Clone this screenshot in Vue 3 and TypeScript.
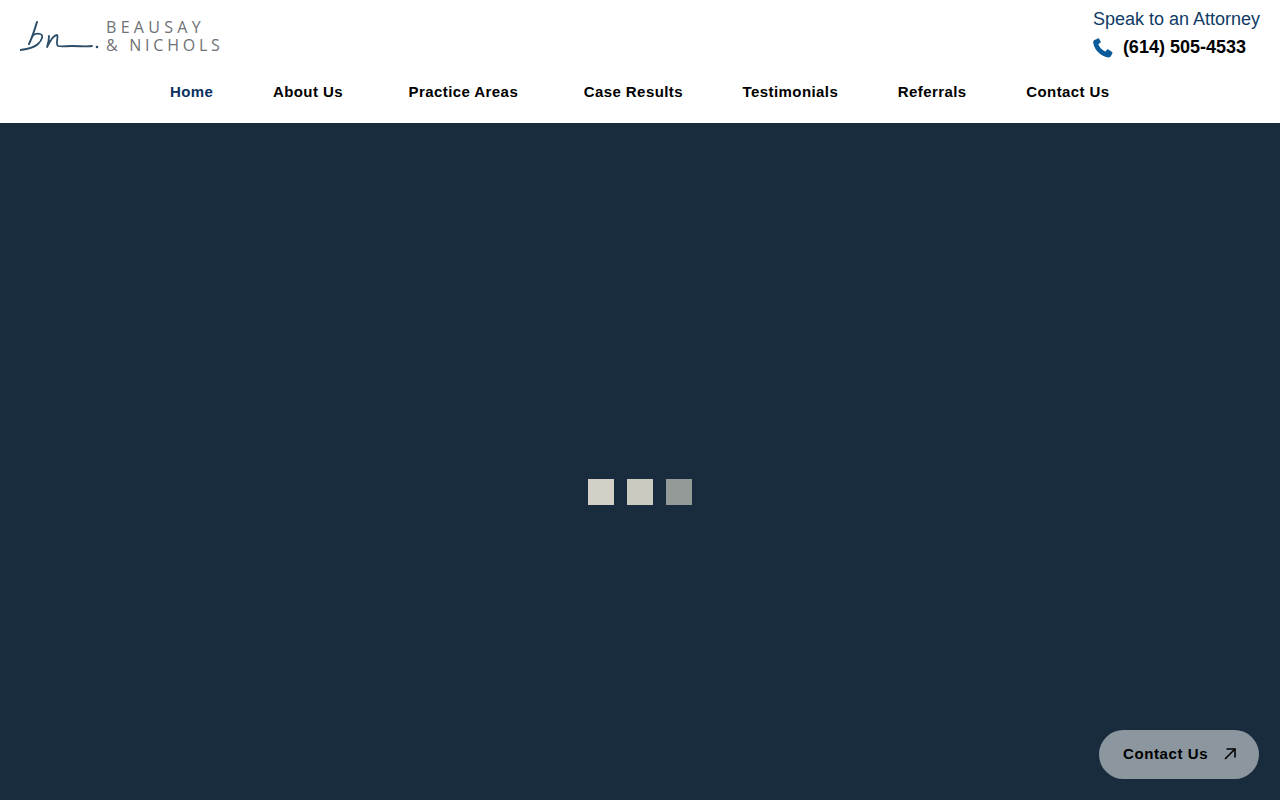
<template>
  <div class="page">
    <header class="site-header">
      <div class="top-row">
        <a class="logo" href="#" aria-label="Beausay and Nichols">
          <svg class="logo-mark" width="80" height="34" viewBox="0 0 80 34" fill="none" stroke="#2b4d68" stroke-linecap="round" stroke-linejoin="round">
            <path d="M17 2 C15 8 13 16 9 24" stroke-width="2"/>
            <path d="M0.500 30 C8 29 14 28 18 24 C22 20 24 15 20 14 C16 13 13 15 12 17" stroke-width="1.800"/>
            <path d="M29 16 C29 20 28 24 27 27 C30 21 34 15 37 15 C39 16 35 24 38 26 C42 27 46 26 52 26 C60 26 66 27 72 26" stroke-width="1.800"/>
            <circle cx="77" cy="27" r="1.300" fill="#2b4d68" stroke="none"/>
          </svg>
          <span class="logo-text">
            <span class="line-one">BEAUSAY</span>
            <span class="line-two">&amp; NICHOLS</span>
          </span>
        </a>
        <div class="contact-block">
          <div class="speak">Speak to an Attorney</div>
          <a class="phone" href="#">
            <svg width="20" height="20" viewBox="1 1 23 23" fill="#0b5a9a">
              <path d="M6.6 1.500 L2.800 3.200 C1.500 3.900 1 5 1.200 6.500 C2 11 4.300 14.900 7.300 17.800 C10.400 20.700 14.200 22.700 18.400 23.300 C19.900 23.500 21 23 21.700 21.800 L23.300 18.500 C23.600 17.900 23.400 17.400 22.900 17 L18.700 14.200 C18.100 13.800 17.600 13.900 17.100 14.400 L15.200 16.600 C13.400 15.800 11.700 14.500 10.200 13 C8.900 11.600 7.800 10 7.100 8.300 L9.400 6.600 C9.900 6.200 10 5.600 9.800 5 L7.900 2 C7.600 1.400 7.100 1.300 6.600 1.500 Z"/>
            </svg>
            <span>(614) 505-4533</span>
          </a>
        </div>
      </div>
      <nav class="main-nav">
        <a
          v-for="item in navItems"
          :key="item.label"
          href="#"
          class="nav-link"
          :class="{ active: item.active, 'has-menu': item.hasMenu }"
        >{{ item.label }}</a>
      </nav>
    </header>

    <main class="hero">
      <div class="loader">
        <span class="dot one"></span>
        <span class="dot two"></span>
        <span class="dot three"></span>
      </div>
      <a class="float-contact" href="#">
        <span>Contact Us</span>
        <svg width="14" height="14" viewBox="0 0 14 14" fill="none" stroke="#000" stroke-width="1.600">
          <path d="M2 12 L12 2"/>
          <path d="M3.500 2 H12 V10.500"/>
        </svg>
      </a>
    </main>
  </div>
</template>

<script setup lang="ts">
interface NavItem {
  label: string
  active?: boolean
  hasMenu?: boolean
}

const navItems: NavItem[] = [
  { label: 'Home', active: true },
  { label: 'About Us', hasMenu: true },
  { label: 'Practice Areas', hasMenu: true },
  { label: 'Case Results' },
  { label: 'Testimonials' },
  { label: 'Referrals' },
  { label: 'Contact Us' },
]
</script>

<style>
html, body {
  margin: 0;
  background: #192c3e;
}
</style>

<style scoped>
.page {
  width: 1280px;
  height: 800px;
  display: flex;
  flex-direction: column;
  overflow: hidden;
  font-family: "Liberation Sans", Arial, sans-serif;
}
a {
  text-decoration: none;
  color: inherit;
}
.site-header {
  height: 123px;
  flex: none;
  background: #fff;
  box-sizing: border-box;
  padding: 9px 20px 0 20px;
}
.top-row {
  display: flex;
  justify-content: space-between;
  align-items: flex-start;
  height: 50px;
}
.logo {
  display: flex;
  align-items: flex-start;
  margin-top: 11px;
}
.logo-mark {
  display: block;
  flex: none;
}
.logo-text {
  display: flex;
  flex-direction: column;
  margin-left: 6px;
  margin-top: -2px;
  font-family: "Open Sans", Lato, sans-serif;
  font-size: 16px;
  font-weight: 500;
  line-height: 18px;
  color: #6f7175;
  white-space: nowrap;
}
.line-one {
  letter-spacing: 4.300px;
}
.line-two {
  letter-spacing: 3.750px;
}
.contact-block {
  display: flex;
  flex-direction: column;
  gap: 7px;
}
.speak {
  font-size: 18px;
  line-height: 21px;
  color: #0f3b66;
}
.phone {
  display: flex;
  align-items: center;
  gap: 10px;
  font-size: 18px;
  line-height: 21px;
  font-weight: 700;
  color: #000;
}
.main-nav {
  display: flex;
  justify-content: flex-start;
  gap: 59.600px;
  margin-top: 24px;
  padding-left: 150px;
}
.nav-link {
  font-size: 15px;
  line-height: 18px;
  font-weight: 700;
  letter-spacing: 0.420px;
  color: #000;
  white-space: nowrap;
}
.nav-link.has-menu {
  margin-right: 6px;
}
.nav-link.active {
  color: #0a3161;
}
.hero {
  flex: 1;
  position: relative;
  background: #192c3e;
  display: flex;
  justify-content: center;
  padding-top: 356px;
  box-sizing: border-box;
}
.loader {
  display: flex;
  gap: 13px;
  height: 26px;
}
.dot {
  width: 26px;
  height: 26px;
}
.one {
  background: #d3d1c7;
}
.two {
  background: #cbcabe;
}
.three {
  background: #949a98;
}
.float-contact {
  position: absolute;
  right: 21px;
  bottom: 21px;
  width: 160px;
  height: 49px;
  box-sizing: border-box;
  padding: 0 0 2px 24px;
  border-radius: 25px;
  background: #8c969f;
  display: flex;
  align-items: center;
  gap: 15px;
  font-size: 15px;
  font-weight: 700;
  letter-spacing: 0.600px;
  color: #000;
}
</style>
